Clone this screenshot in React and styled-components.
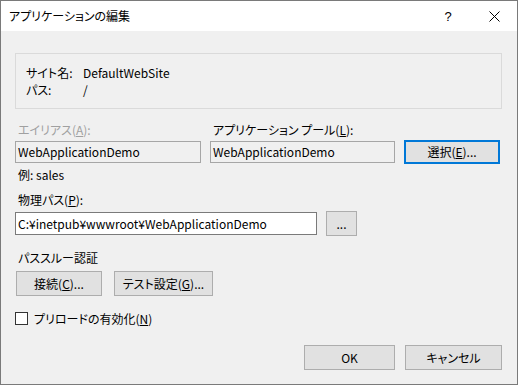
import React from "react";
import styled, { createGlobalStyle } from "styled-components";

const Global = createGlobalStyle`
  html, body { margin: 0; padding: 0; background: #f0f0f0; }
  * { box-sizing: border-box; }
  body {
    font-family: "Noto Sans CJK JP", "Noto Sans", sans-serif;
    font-size: 12px;
    font-feature-settings: "palt";
    color: #000;
  }
`;

const Window = styled.div`
  width: 518px;
  height: 385px;
  border: 1px solid #7a7a7a;
  background: #f0f0f0;
  display: flex;
  flex-direction: column;
  overflow: hidden;
`;

const TitleBar = styled.div`
  height: 30px;
  background: #fff;
  display: flex;
  align-items: center;
  padding-left: 8px;
`;

const Title = styled.div`
  flex: 1;
  font-size: 12px;
  line-height: 16px;
`;

const CaptionButton = styled.div`
  width: 46px;
  height: 30px;
  display: flex;
  align-items: center;
  justify-content: center;
  font-family: "Liberation Sans", sans-serif;
  font-size: 13px;
`;

const Body = styled.div`
  flex: 1;
  display: flex;
  flex-direction: column;
  padding: 0 15px 0 14px;
`;

const Section = styled.div`
  margin-top: ${(p) => p.$mt || 0}px;
`;

const GroupBox = styled(Section)`
  border: 1px solid #dadada;
  padding: 10px 10px 10px 10px;
  display: grid;
  grid-template-columns: 57px 1fr;
  grid-auto-rows: 17px;
  align-items: center;
`;

const Text = styled.div`
  line-height: 16px;
  padding-left: ${(p) => (p.$indent ? 3 : 0)}px;
  color: ${(p) => (p.$disabled ? "#a0a0a0" : "#000")};
  white-space: nowrap;
`;

const FieldGrid = styled(Section)`
  display: grid;
  grid-template-columns: 186px 185px 96px;
  column-gap: 9px;
  row-gap: 2px;
  align-items: center;
`;

const Input = styled.div`
  height: ${(p) => p.$h || 22}px;
  border: 1px solid ${(p) => (p.$readOnly ? "#a6a6a6" : "#7a7a7a")};
  background: ${(p) => (p.$readOnly ? "#f0f0f0" : "#fff")};
  padding-left: 2px;
  display: flex;
  align-items: center;
  line-height: 16px;
  white-space: nowrap;
  overflow: hidden;
`;

const Button = styled.div`
  height: ${(p) => p.$h || 25}px;
  width: ${(p) => p.$w}px;
  background: #e1e1e1;
  border: ${(p) => (p.$focused ? "2px solid #0078d7" : "1px solid #adadad")};
  display: flex;
  align-items: center;
  justify-content: center;
  line-height: 16px;
  white-space: nowrap;
`;

const PathRow = styled(Section)`
  display: flex;
  align-items: center;
  gap: 9px;
`;

const ButtonRow = styled(Section)`
  display: flex;
  gap: 12px;
  padding-left: 1px;
`;

const CheckRow = styled(Section)`
  display: flex;
  align-items: center;
  gap: 6px;
  height: 16px;
  padding-top: 1px;
`;

const CheckBox = styled.div`
  width: 13px;
  height: 13px;
  border: 1px solid #333;
  background: #fff;
`;

const Footer = styled(Section)`
  display: flex;
  justify-content: flex-end;
  gap: 10px;
`;

const U = styled.u`
  text-underline-offset: 1px;
`;

export default function App() {
  return (
    <>
      <Global />
      <Window>
        <TitleBar>
          <Title>アプリケーションの編集</Title>
          <CaptionButton>?</CaptionButton>
          <CaptionButton>
            <svg width="11" height="11" viewBox="0 0 11 11">
              <path d="M0.5 0.5 L10.5 10.5 M10.5 0.5 L0.5 10.5" stroke="#000" strokeWidth="1" fill="none" />
            </svg>
          </CaptionButton>
        </TitleBar>
        <Body>
          <GroupBox $mt={22}>
            <Text>サイト名:</Text>
            <Text>DefaultWebSite</Text>
            <Text>パス:</Text>
            <Text>/</Text>
          </GroupBox>

          <FieldGrid $mt={13}>
            <Text $indent $disabled>
              エイリアス(<U>A</U>):
            </Text>
            <Text $indent>
              アプリケーション プール(<U>L</U>):
            </Text>
            <div />
            <Input $readOnly>WebApplicationDemo</Input>
            <Input $readOnly>WebApplicationDemo</Input>
            <Button $h={24} $focused>
              選択(<U>E</U>)...
            </Button>
          </FieldGrid>

          <Section $mt={3}>
            <Text $indent>例: sales</Text>
          </Section>

          <Section $mt={9}>
            <Text $indent>
              物理パス(<U>P</U>):
            </Text>
          </Section>

          <PathRow $mt={3}>
            <Input $h={23} style={{ width: 302 }}>
              C:¥inetpub¥wwwroot¥WebApplicationDemo
            </Input>
            <Button $w={31}>...</Button>
          </PathRow>

          <Section $mt={14}>
            <Text $indent>パススルー認証</Text>
          </Section>

          <ButtonRow $mt={5}>
            <Button $w={86}>
              接続(<U>C</U>)...
            </Button>
            <Button $w={99}>
              テスト設定(<U>G</U>)...
            </Button>
          </ButtonRow>

          <CheckRow $mt={14}>
            <CheckBox />
            <Text>
              プリロードの有効化(<U>N</U>)
            </Text>
          </CheckRow>

          <Footer $mt={19}>
            <Button $w={91}>OK</Button>
            <Button $w={97}>キャンセル</Button>
          </Footer>
        </Body>
      </Window>
    </>
  );
}
